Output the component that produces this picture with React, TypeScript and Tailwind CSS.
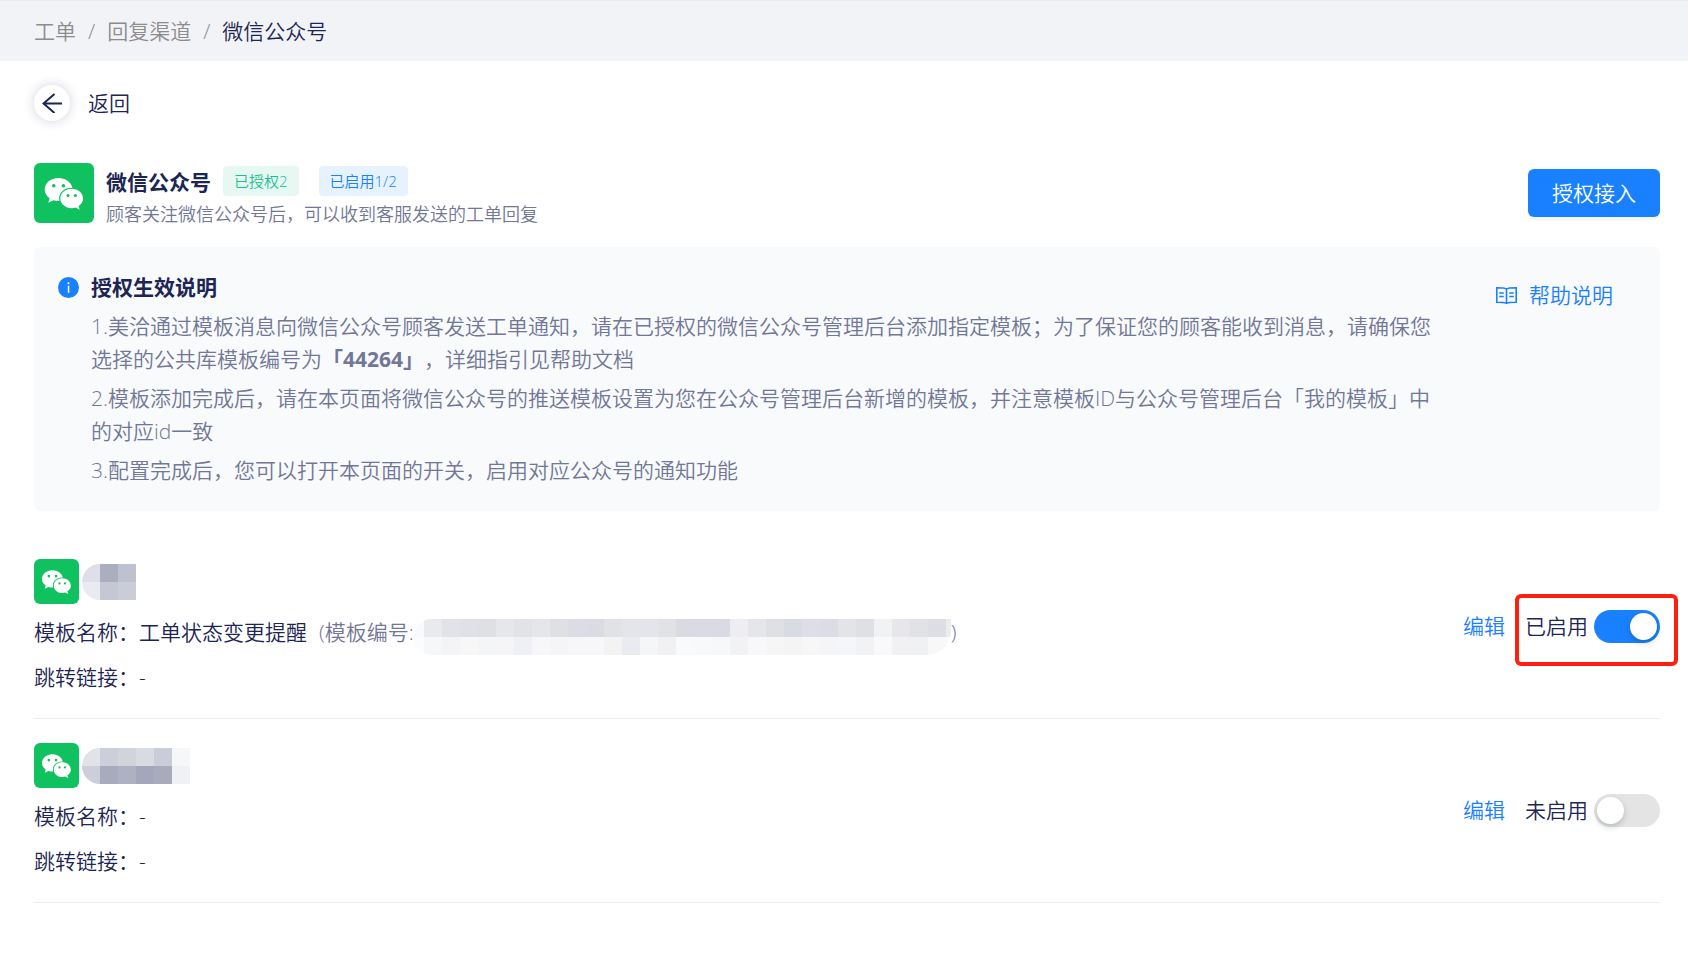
import { useState } from "react";

interface Channel {
  id: string;
  template: string;
  hasCode: boolean;
  link: string;
  enabled: boolean;
  highlighted: boolean;
}

const channels: Channel[] = [
  { id: "a", template: "工单状态变更提醒", hasCode: true, link: "-", enabled: true, highlighted: true },
  { id: "b", template: "-", hasCode: false, link: "-", enabled: false, highlighted: false },
];

const nameMasks: Record<string, string[][]> = {
  a: [
    ["#dedfe8", "#abaebf", "#bec1cf"],
    ["#eaebf0", "#c5c7d4", "#cacdd8"],
  ],
  b: [
    ["#e1e3e9", "#cccfd9", "#d1d4db", "#d8dbe2", "#cacdd8", "#f6f7f9"],
    ["#cccfd9", "#a8abbd", "#afb1c2", "#a4a6bb", "#a9abbd", "#f0f1f5"],
  ],
};

const codeMask: string[][] = [
  [
    "#f8f9fc", "#e9eaee", "#e2e3e8", "#e0e1e6", "#dfe0e4", "#e6e7eb", "#e2e3e6", "#e5e6ea", "#dfe0e4", "#dcdce6",
    "#dbdbe3", "#e1e2e6", "#e4e5ea", "#e4e5ea", "#e1e2e6", "#dadbe2", "#dadae4", "#d9dae3", "#ededf2", "#e5e6ea",
    "#dfe0e4", "#d8dbe2", "#dedee8", "#dbdce5", "#e3e4e8", "#dfe0e4", "#f1f2f3", "#e7e7eb", "#e1e2e6", "#dddee3", "#ebecf1",
  ],
  [
    "#fbfdfd", "#f6f7f8", "#f4f4f6", "#f7f7f7", "#f4f5f7", "#f5f5f7", "#eff0f5", "#f7f7f9", "#f5f5f7", "#f7f7f9",
    "#f7f7f9", "#f3f3f4", "#eaebf0", "#f5f6f8", "#f1f1f3", "#f9fafc", "#f8f9fb", "#f7f8fa", "#f2f2f4", "#f8f8fb",
    "#f6f6f7", "#f4f4f5", "#f7f7f8", "#f5f5f8", "#f5f6f9", "#f2f2f4", "#f9f9fc", "#f1f1f4", "#f0f1f3", "#f8f8f8", "#fafafa",
  ],
];

interface MosaicProps {
  cells: string[][];
  className: string;
  cropLeft?: number;
  cropRight?: number;
}

function Mosaic({ cells, className, cropLeft = 0, cropRight = 0 }: MosaicProps) {
  const width = cells[0].length * 18 - cropLeft - cropRight;

  return (
    <svg
      width={width}
      height={36}
      viewBox={`${cropLeft} 0 ${width} 36`}
      className={className}
      shapeRendering="crispEdges"
      aria-hidden="true"
    >
      {cells.map((row, y) =>
        row.map((color, x) => (
          <rect key={`${x}-${y}`} x={x * 18} y={y * 18} width={18} height={18} fill={color} />
        ))
      )}
    </svg>
  );
}

function WechatLogo({ className }: { className: string }) {
  return (
    <svg viewBox="0 0 60 60" className={className} aria-hidden="true">
      <rect width="60" height="60" fill="#10c160" />
      <path
        fill="#fff"
        d="M24.3 15C16.800 15 10.700 20.100 10.700 26.500c0 3.500 1.900 6.600 4.900 8.700l-1.300 4.500 5-2.500c1.600.5 3.200.8 5 .8h1.200a10.200 10.200 0 0 1-.4-2.700c0-5.900 5.600-10.600 12.300-10.600h1C37.200 19.100 31.300 15 24.300 15Z"
      />
      <path
        fill="#fff"
        d="M37.700 25.800c-6.300 0-11.400 4.300-11.400 9.700s5.100 9.700 11.400 9.700c1.400 0 2.700-.2 3.900-.6l4.100 2.100-1.100-3.700c2.700-1.800 4.500-4.500 4.500-7.500 0-5.400-5.100-9.700-11.400-9.700Z"
      />
      <g fill="#10c160">
        <circle cx="19.800" cy="22.700" r="1.800" />
        <circle cx="29.400" cy="22.700" r="1.800" />
        <circle cx="34" cy="32.600" r="1.500" />
        <circle cx="41.400" cy="32.600" r="1.500" />
      </g>
    </svg>
  );
}

function ChannelItem({ channel }: { channel: Channel }) {
  const [enabled, setEnabled] = useState(channel.enabled);

  return (
    <li className="flex items-center justify-between border-b border-[#ebecf5] py-6">
      <div className="flex flex-col gap-3">
        <div className="flex items-center gap-[3px]">
          <WechatLogo className="size-[45px] rounded-md" />
          <Mosaic cells={nameMasks[channel.id]} className="rounded-l-[18px]" />
        </div>
        <p className="flex items-start">
          模板名称：{channel.template}
          {channel.hasCode && (
            <span className="ml-3 flex items-start text-[#717796]">
              (模板编号:
              <Mosaic
                cells={codeMask}
                cropLeft={8}
                cropRight={13}
                className="mt-[3px] -mb-[6px] rounded-l-[18px] rounded-br-3xl"
              />
              )
            </span>
          )}
        </p>
        <p>跳转链接：{channel.link}</p>
      </div>
      <div className="flex items-center gap-5">
        <a href="#edit" className="text-[#1980ff]">编辑</a>
        <label className="relative flex items-center gap-[6px]">
          {enabled ? "已启用" : "未启用"}
          <input
            type="checkbox"
            role="switch"
            checked={enabled}
            onChange={(e) => setEnabled(e.target.checked)}
            className="h-[33px] w-[66px] cursor-pointer appearance-none rounded-full bg-[#e4e4e4] p-[3px] before:block before:size-[27px] before:rounded-full before:bg-white before:shadow-[0_3px_6px_rgba(0,35,11,0.2)] checked:bg-[#1980ff] checked:before:ml-[33px]"
          />
          {channel.highlighted && (
            <span className="pointer-events-none absolute -top-4 -right-[18px] -bottom-[23px] -left-[10px] rounded-md border-4 border-[#ff1f10]" />
          )}
        </label>
      </div>
    </li>
  );
}

export default function App() {
  return (
    <div className="min-h-screen bg-white font-['Open_Sans','Noto_Sans_CJK_SC',sans-serif] text-[21px] leading-[33px] font-[350] text-[#1c2553]">
      <nav className="flex h-[61px] items-center gap-3 border-t border-[#e9ebf0] bg-[#f2f3f7] px-[34px] text-[#8c8c8c]">
        <a href="#tickets">工单</a>
        <span>/</span>
        <a href="#channels">回复渠道</a>
        <span>/</span>
        <span className="text-[#1c2553]">微信公众号</span>
      </nav>

      <main className="pt-6 pr-7 pl-[34px]">
        <button type="button" className="flex cursor-pointer items-center gap-[18px]">
          <span className="flex size-9 items-center justify-center rounded-full bg-white shadow-[0_0_12px_rgba(28,37,83,0.2)]">
            <svg width="20" height="20" viewBox="0 0 20 20" fill="none" stroke="#1c2553" strokeWidth="2" aria-hidden="true">
              <path d="M20 10.500H1.500M12.500 1 1.500 10.500l11 9.500" />
            </svg>
          </span>
          返回
        </button>

        <header className="mt-[42px] flex items-start justify-between">
          <div className="flex items-start gap-3">
            <WechatLogo className="size-[60px] rounded-md" />
            <div className="pt-[3px]">
              <div className="flex items-start">
                <h1 className="font-bold">微信公众号</h1>
                <span className="ml-3 rounded bg-[#e7f8f2] px-[11px] text-[15px] leading-[30px] text-[#17c295]">已授权2</span>
                <span className="ml-5 rounded bg-[#e6f3ff] px-[11px] text-[15px] leading-[30px] text-[#1980ff]">已启用1/2</span>
              </div>
              <p className="text-lg leading-[30px] text-[#717796]">顾客关注微信公众号后，可以收到客服发送的工单回复</p>
            </div>
          </div>
          <button type="button" className="mt-[6px] h-12 cursor-pointer rounded-md bg-[#1980ff] px-6 text-white shadow-[0_3px_0_rgba(0,0,0,0.04)]">
            授权接入
          </button>
        </header>

        <section className="mt-[18px] flex items-start rounded-md bg-[#f9fafc] py-6 pr-[47px] pl-6">
          <svg width="21" height="21" viewBox="0 0 21 21" className="mt-[6px] mr-3 shrink-0" aria-hidden="true">
            <circle cx="10.500" cy="10.500" r="10.500" fill="#1980ff" />
            <path fill="#fff" d="M9.800 8.700h1.500v7H9.800zM9.500 6.200a1 1 0 1 1 2 0 1 1 0 0 1-2 0z" />
          </svg>
          <div className="flex flex-1 flex-col gap-[6px] text-[#717796] [text-spacing-trim:space-all]">
            <h2 className="font-bold text-[#1c2553]">授权生效说明</h2>
            <p>
              1.美洽通过模板消息向微信公众号顾客发送工单通知，请在已授权的微信公众号管理后台添加指定模板；为了保证您的顾客能收到消息，请确保您选择的公共库模板编号为<b className="font-bold">「44264」</b>，详细指引见帮助文档
            </p>
            <p>2.模板添加完成后，请在本页面将微信公众号的推送模板设置为您在公众号管理后台新增的模板，并注意模板ID与公众号管理后台「我的模板」中的对应id一致</p>
            <p>3.配置完成后，您可以打开本页面的开关，启用对应公众号的通知功能</p>
          </div>
          <a href="#help" className="mt-2 ml-14 flex items-center gap-3 text-[#1980ff]">
            <svg width="21" height="21" viewBox="0 0 21 21" fill="none" stroke="currentColor" strokeWidth="1.600" aria-hidden="true">
              <path d="M10.500 4C8.500 2.900 6 2.800.8 2.800v14.400c5.200 0 7.700.1 9.700 1.200 2-1.100 4.500-1.200 9.700-1.200V2.800c-5.200 0-7.700.1-9.700 1.200ZM10.500 4v14.400M3.200 8h4.600M3.200 11.500h4.600M13.200 8h4.600M13.200 11.500h4.600" />
            </svg>
            帮助说明
          </a>
        </section>

        <ul className="mt-6">
          {channels.map((channel) => (
            <ChannelItem key={channel.id} channel={channel} />
          ))}
        </ul>
      </main>
    </div>
  );
}
